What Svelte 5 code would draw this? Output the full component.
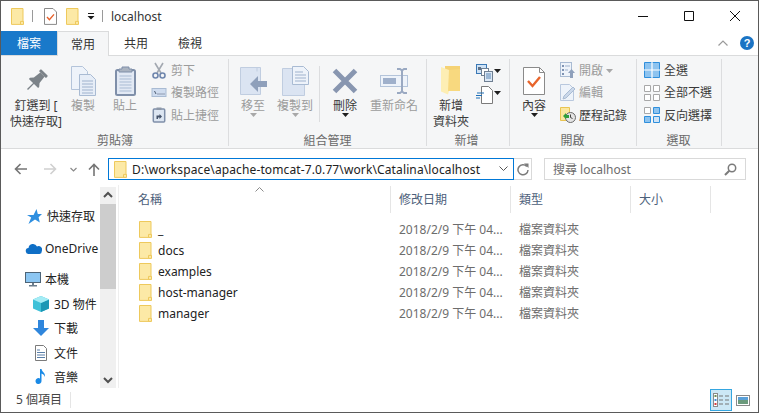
<script>
  const smallRows = [
    { label: '開啟', caret: true },
    { label: '編輯' },
    { label: '歷程記錄', on: true }
  ]

  const folders = ['_', 'docs', 'examples', 'host-manager', 'manager']
  const modified = '2018/2/9 下午 04...'
  const kind = '檔案資料夾'
</script>

{#snippet folder()}
  <svg class="folder" width="13" height="17" viewBox="0 0 13 17">
    <path d="M.5.5h11.5v15.9H.5z" fill="#fce9a6" stroke="#eec95c"/>
    <path d="M9.5 16.4v-3h3v3z" fill="#fce9a6" stroke="#eec95c"/>
  </svg>
{/snippet}

{#snippet caret(muted)}
  <svg class="caret" width="7" height="4" viewBox="0 0 7 4"><path d="M0 0h7L3.5 4z" fill={muted ? '#a8a8a8' : '#1e1e1e'}/></svg>
{/snippet}

<div class="window">
  <header class="titlebar">
    <div class="quick">
      {@render folder()}
      <span class="qsep"></span>
      <svg width="13" height="17" viewBox="0 0 13 17">
        <path d="M.5.5h8.5l3.5 3.5v12.4H.5z" fill="#fff" stroke="#8a8a8a"/>
        <path d="M3 9l2.4 2.6L10 6.4" fill="none" stroke="#e8602a" stroke-width="1.4"/>
      </svg>
      {@render folder()}
      <svg class="qdrop" width="8" height="8" viewBox="0 0 8 8"><path d="M1 1h6v1H1zM.5 4h7L4 7.6z" fill="#1a1a1a"/></svg>
      <span class="qsep"></span>
    </div>
    <span class="title">localhost</span>
    <div class="controls">
      <svg width="46" height="30" viewBox="0 0 46 30"><path d="M18 15.5h10" stroke="#111" fill="none"/></svg>
      <svg width="46" height="30" viewBox="0 0 46 30"><path d="M18.5 10.5h9v9h-9z" stroke="#111" fill="none"/></svg>
      <svg width="46" height="30" viewBox="0 0 46 30"><path d="M18 10l10 10M28 10L18 20" stroke="#111" fill="none"/></svg>
    </div>
  </header>

  <nav class="tabs">
    <span class="tab file">檔案</span>
    <span class="tab active">常用</span>
    <span class="tab">共用</span>
    <span class="tab">檢視</span>
    <span class="tab-tools">
      <svg width="10" height="6" viewBox="0 0 10 6"><path d="M.5 5.5L5 1l4.5 4.5" fill="none" stroke="#9a9a9a" stroke-width="1.2"/></svg>
      <span class="help">?</span>
    </span>
  </nav>

  <section class="ribbon">
    <div class="group g1">
      <div class="group-body">
        <div class="big on w-pin">
          <span class="big-icon">
            <svg width="24" height="24" viewBox="0 0 24 24">
              <g transform="rotate(45 12 12)" fill="#7c8389">
                <rect x="7" y="0" width="10" height="3" rx="1"/>
                <path d="M9 3h6l1 8 2.5 3v1.5h-13V14L8 11z"/>
                <rect x="11.3" y="15" width="1.4" height="9"/>
              </g>
            </svg>
          </span>
          <span>釘選到 [</span><span>快速存取]</span>
        </div>
        <div class="big w-42">
          <span class="big-icon">
            <svg width="25" height="30" viewBox="0 0 25 30">
              <path d="M.5.5h11l5 5v18H.5z" fill="#eef3fa" stroke="#b4c4da"/>
              <path d="M8.5 8.5h11l5 5v16h-16z" fill="#e6edf7" stroke="#a9bbd3"/>
              <path d="M11 15h11M11 18h11M11 21h11M11 24h11M11 27h11" stroke="#9fb2cd"/>
            </svg>
          </span>
          <span>複製</span>
        </div>
        <div class="big w-42">
          <span class="big-icon">
            <svg width="21" height="30" viewBox="0 0 21 30">
              <rect x="1" y="4" width="19" height="25" rx="1.5" fill="#e2e9f4" stroke="#7f8fa9" stroke-width="2"/>
              <path d="M7 1h7v2h3v3H4V3h3z" fill="#aab3c0" stroke="#7f8fa9"/>
              <path d="M4.5 10h12M4.5 13h12M4.5 16h12M4.5 19h12M4.5 22h12M4.5 25h12" stroke="#a9bbd3"/>
            </svg>
          </span>
          <span>貼上</span>
        </div>
        <div class="smalls s1">
          <div class="small">
            <svg width="14" height="17" viewBox="0 0 14 17">
              <path d="M3 1l6 10M11 1L5 11" stroke="#a3a9b1" stroke-width="1.6" fill="none"/>
              <circle cx="3.5" cy="13.5" r="2.5" fill="none" stroke="#6f86ad" stroke-width="1.6"/>
              <circle cx="10.5" cy="13.5" r="2.5" fill="none" stroke="#6f86ad" stroke-width="1.6"/>
            </svg>
            <span>剪下</span>
          </div>
          <div class="small">
            <svg width="15" height="9" viewBox="0 0 15 9">
              <rect x=".5" y=".5" width="14" height="8" fill="#cfdcef" stroke="#a9bbd3"/>
              <path d="M3 3l1.5 3M6 6h1M8 6h1M10 6h1M12 6h1" stroke="#4c5a70"/>
            </svg>
            <span>複製路徑</span>
          </div>
          <div class="small">
            <svg width="13" height="16" viewBox="0 0 13 16">
              <rect x=".8" y="2" width="11.4" height="13" rx="1" fill="#dde6f2" stroke="#7f8fa9" stroke-width="1.5"/>
              <rect x="4" y=".5" width="5" height="2.5" fill="#8d98a8"/>
              <path d="M4 12V8.5h3V7l2.5 2.5L7 12v-1.5H5.5V12z" fill="#45536a"/>
            </svg>
            <span>貼上捷徑</span>
          </div>
        </div>
      </div>
      <div class="group-label">剪貼簿</div>
    </div>

    <div class="group g2">
      <div class="group-body">
        <div class="big w-move">
          <span class="big-icon">
            <svg width="27" height="28" viewBox="0 0 27 28">
              <path d="M.5.5h20v27H.5z" fill="#dbe4f2" stroke="#c0cde0"/>
              <path d="M17 .5v4" stroke="#c0cde0"/>
              <path d="M10 17l8-8v5h9v6h-9v5z" fill="#8fa0bb"/>
            </svg>
          </span>
          <span>移至</span>
          {@render caret(true)}
        </div>
        <div class="big w-move">
          <span class="big-icon">
            <svg width="27" height="30" viewBox="0 0 27 30">
              <path d="M.5 2.500h22v27H.5z" fill="#dbe4f2" stroke="#c0cde0"/>
              <path d="M10.500.5h11l5 5v13h-16z" fill="#eef3fa" stroke="#a9bbd3"/>
              <path d="M13 6h8M13 9h11M13 12h11M13 15h11" stroke="#9fb2cd"/>
            </svg>
          </span>
          <span>複製到</span>
          {@render caret(true)}
        </div>
        <span class="inner-sep"></span>
        <div class="big on w-del">
          <span class="big-icon">
            <svg width="26" height="26" viewBox="0 0 26 26"><path d="M2.500 2.500l21 21M23.500 2.500l-21 21" stroke="#8896b0" stroke-width="5" fill="none"/></svg>
          </span>
          <span>刪除</span>
          {@render caret(false)}
        </div>
        <div class="big w-ren">
          <span class="big-icon">
            <svg width="29" height="26" viewBox="0 0 29 26">
              <rect x=".5" y="7.500" width="27" height="11" fill="#eef3fa" stroke="#b4c4da"/>
              <rect x="3" y="10" width="13" height="6" fill="#9fb0cb"/>
              <path d="M17 1h3l2 1.500L24 1h3M22 3v20M17 25h3l2-1.500L24 25h3" fill="none" stroke="#9aa9c2" stroke-width="2"/>
            </svg>
          </span>
          <span>重新命名</span>
        </div>
      </div>
      <div class="group-label">組合管理</div>
    </div>

    <div class="group g3">
      <div class="group-body">
        <div class="big on w-new">
          <span class="big-icon">
            <svg width="20" height="29" viewBox="0 0 20 29">
              <path d="M4 0h15v25H4z" fill="#f5d274"/>
              <path d="M0 1l8 3v21l-1 3.500-7-3z" fill="#fdeeb4"/>
              <path d="M8 4l11-1v22H7z" fill="#f8d97f"/>
            </svg>
          </span>
          <span>新增</span><span>資料夾</span>
        </div>
        <div class="new-tools">
          <div class="tool">
            <svg width="17" height="18" viewBox="0 0 17 18">
              <rect x=".5" y=".5" width="10" height="9" fill="#cfe2f5" stroke="#3b78b5"/>
              <path d="M2 3h3v3H2z" fill="#5c6f85"/>
              <rect x="5.500" y="4.500" width="7" height="7" fill="#fff" stroke="#6f7f92"/>
              <rect x="8.500" y="7.500" width="8" height="10" fill="#dde9f6" stroke="#6f7f92"/>
              <path d="M10 10h5M10 12h5M10 14h5" stroke="#5b86b5"/>
            </svg>
            {@render caret(false)}
          </div>
          <div class="tool">
            <svg width="17" height="18" viewBox="0 0 17 18">
              <path d="M5.500 .5h7l4 4v13h-11z" fill="#fff" stroke="#7b7b7b"/>
              <path d="M1 7h7M0 9.500h6M0 12h4" stroke="#1d6fb8" stroke-width="1.200"/>
            </svg>
            {@render caret(false)}
          </div>
        </div>
      </div>
      <div class="group-label">新增</div>
    </div>

    <div class="group g4">
      <div class="group-body">
        <div class="big on w-prop">
          <span class="big-icon">
            <svg width="22" height="28" viewBox="0 0 22 28">
              <path d="M.5.5h16l5 5v22H.5z" fill="#fff" stroke="#8a8a8a"/>
              <path d="M16.500.5v5h5" fill="none" stroke="#8a8a8a"/>
              <path d="M5 14l4.500 5L17 10" fill="none" stroke="#e8652c" stroke-width="2.400"/>
            </svg>
          </span>
          <span>內容</span>
          {@render caret(false)}
        </div>
        <div class="smalls s4">
          {#each smallRows as row, i}
            <div class="small" class:on={row.on}>
              {#if i === 0}
                <svg width="16" height="16" viewBox="0 0 16 16">
                  <rect x=".5" y=".5" width="11" height="14" fill="#eef3fa" stroke="#a9bbd3"/>
                  <path d="M2 3h2v2H2zM2 7h2v2H2zM2 11h2v2H2z" fill="#7f93b3"/>
                  <path d="M5 4h5M5 8h3" stroke="#9fb2cd"/>
                  <path d="M8 11l3.500-4 3.500 4h-2v5h-3v-5z" fill="#8fa0bb"/>
                </svg>
              {:else if i === 1}
                <svg width="16" height="17" viewBox="0 0 16 17">
                  <path d="M.5.500h9l4 4v12H.5z" fill="#eef3fa" stroke="#b9c8de"/>
                  <path d="M3 15l1-3 9-9 2 2-9 9z" fill="#cbd8ea" stroke="#a9bbd3"/>
                </svg>
              {:else}
                <svg width="16" height="16" viewBox="0 0 16 16">
                  <path d="M.5.500h9v13h-9z" fill="#fbe79f" stroke="#e9c451"/>
                  <circle cx="10.500" cy="10.500" r="5" fill="#e4e4e4" stroke="#6b6b6b"/>
                  <path d="M10.500 7.500v3l2 1" stroke="#444" fill="none"/>
                  <path d="M3 9l3-3v2h3v3H6v1z" fill="#2f9e3c"/>
                </svg>
              {/if}
              <span>{row.label}</span>
              {#if row.caret}{@render caret(true)}{/if}
            </div>
          {/each}
        </div>
      </div>
      <div class="group-label">開啟</div>
    </div>

    <div class="group g5">
      <div class="group-body">
        <div class="smalls s5">
          <div class="small on">
            <svg class="grid-icon" width="16" height="16" viewBox="0 0 16 16">
              <path d="M.5.500h15v15H.5z" fill="#8dc3ef" stroke="#2f8fdc"/>
              <path d="M8 0v16M0 8h16" stroke="#fff" stroke-width="1.200"/>
            </svg>
            <span>全選</span>
          </div>
          <div class="small on">
            <svg class="grid-icon" width="16" height="16" viewBox="0 0 16 16">
              <path d="M.5.500h6v6h-6zM9.500.500h6v6h-6zM.5 9.500h6v6h-6zM9.500 9.500h6v6h-6z" fill="#fff" stroke="#a8a8a8"/>
            </svg>
            <span>全部不選</span>
          </div>
          <div class="small on">
            <svg class="grid-icon" width="16" height="16" viewBox="0 0 16 16">
              <path d="M.5.500h6v6h-6z" fill="#fff" stroke="#a8a8a8"/>
              <path d="M9.500.500h6v6h-6zM.5 9.500h6v6h-6z" fill="#8dc3ef" stroke="#2f8fdc"/>
              <path d="M9.500 9.500h6v6h-6z" fill="#cfe4f7" stroke="#2f8fdc"/>
            </svg>
            <span>反向選擇</span>
          </div>
        </div>
      </div>
      <div class="group-label">選取</div>
    </div>
  </section>

  <div class="navbar">
    <div class="arrows">
      <svg class="back" width="13" height="12" viewBox="0 0 13 12"><path d="M13 6H2M6.500 1L1.500 6l5 5" fill="none" stroke="#757575" stroke-width="1.600"/></svg>
      <svg class="fwd" width="13" height="12" viewBox="0 0 13 12"><path d="M0 6h11M6.500 1l5 5-5 5" fill="none" stroke="#d0d0d0" stroke-width="1.600"/></svg>
      <svg class="hist" width="7" height="5" viewBox="0 0 7 5"><path d="M.5 1L3.500 4l3-3" fill="none" stroke="#8a8a8a" stroke-width="1.200"/></svg>
      <svg class="up" width="12" height="13" viewBox="0 0 12 13"><path d="M6 13V2M1 6.500l5-5 5 5" fill="none" stroke="#757575" stroke-width="1.600"/></svg>
    </div>
    <div class="address">
      {@render folder()}
      <span class="path">D:\workspace\apache-tomcat-7.0.77\work\Catalina\localhost</span>
      <svg width="9" height="6" viewBox="0 0 9 6"><path d="M.5.500l4 4 4-4" fill="none" stroke="#555"/></svg>
    </div>
    <div class="refresh">
      <svg width="12" height="13" viewBox="0 0 12 13"><path d="M9.800 3.500A5 5 0 1 0 11 7" fill="none" stroke="#7b7b7b" stroke-width="1.500"/><path d="M7 .5h4.500v4.500z" fill="#7b7b7b"/></svg>
    </div>
    <div class="search">
      <span>搜尋 localhost</span>
      <svg width="13" height="13" viewBox="0 0 13 13"><circle cx="8" cy="5" r="3.700" fill="none" stroke="#7b7b7b" stroke-width="1.500"/><path d="M5.300 7.700L1 12" stroke="#7b7b7b" stroke-width="2"/></svg>
    </div>
  </div>

  <main class="main">
    <aside class="sidebar">
      <div class="tree t-quick">
        <svg width="15" height="15" viewBox="0 0 15 15"><path d="M9.500 0l1.300 5H15l-3.400 3.200 1.200 5.300L8 10.500 1.500 15l2.700-6.500L0 6h6.500z" fill="#2f8fe0"/></svg>
        <span>快速存取</span>
      </div>
      <div class="tree t-cloud">
        <svg width="17" height="11" viewBox="0 0 17 11"><path d="M4 11a3 3 0 0 1-.5-6A4.500 4.500 0 0 1 12 3.500a3.500 3.500 0 0 1 4.800 4.500 3 3 0 0 1-2.300 3z" fill="#0f6fc6"/></svg>
        <span>OneDrive</span>
      </div>
      <div class="tree t-pc">
        <svg width="16" height="15" viewBox="0 0 16 15"><rect x=".5" y=".5" width="15" height="10" fill="#8cc6f2" stroke="#4d6477"/><path d="M7 11h2v2H7zM4 13h8v1.500H4z" fill="#6a7c8c"/></svg>
        <span>本機</span>
      </div>
      <div class="tree sub t-3d">
        <svg width="16" height="16" viewBox="0 0 16 16"><path d="M8 0l8 3.500v9L8 16l-8-3.500v-9z" fill="#3fc1d8"/><path d="M8 7l8-3.500v9L8 16z" fill="#1b97b5"/><path d="M8 0l8 3.500L8 7 0 3.500z" fill="#a4ecf5"/></svg>
        <span>3D 物件</span>
      </div>
      <div class="tree sub t-dl">
        <svg width="16" height="16" viewBox="0 0 16 16"><path d="M5 0h6v8h5l-8 8-8-8h5z" fill="#2f86dc"/></svg>
        <span>下載</span>
      </div>
      <div class="tree sub t-doc">
        <svg width="16" height="16" viewBox="0 0 16 16"><path d="M2.500.5h8l3 3v12h-11z" fill="#fff" stroke="#7b7b7b"/><path d="M4 5h3M4 7.500h8M4 10h8M4 12.500h8" stroke="#5a7fa8"/></svg>
        <span>文件</span>
      </div>
      <div class="tree sub t-music">
        <svg width="16" height="16" viewBox="0 0 16 16"><path d="M7 0h1.500c.5 3 4 3.500 3.500 8C11 5.500 9.800 5 8.500 4.500V12a3 3 0 1 1-1.500-2.500z" fill="#1a8ae6"/></svg>
        <span>音樂</span>
      </div>
    </aside>

    <div class="scrollbar">
      <svg width="16" height="16" viewBox="0 0 16 16"><path d="M4 10l4-4 4 4" fill="none" stroke="#505050" stroke-width="2"/></svg>
      <div class="thumb"></div>
      <svg class="down" width="16" height="16" viewBox="0 0 16 16"><path d="M4 6l4 4 4-4" fill="none" stroke="#505050" stroke-width="2"/></svg>
    </div>

    <div class="files">
      <svg class="sort" width="9" height="5" viewBox="0 0 9 5"><path d="M.5 4.500l4-4 4 4" fill="none" stroke="#8a8a8a"/></svg>
      <div class="columns">
        <span>名稱</span>
        <span>修改日期</span>
        <span>類型</span>
        <span>大小</span>
      </div>
      <ul class="rows">
        {#each folders as name}
          <li class="row">
            <span class="name">{@render folder()}<span>{name}</span></span>
            <span class="meta">{modified}</span>
            <span class="meta">{kind}</span>
          </li>
        {/each}
      </ul>
    </div>
  </main>

  <footer class="status">
    <span class="count">5 個項目</span>
    <span class="views">
      <span class="view selected">
        <svg width="16" height="14" viewBox="0 0 16 14">
          <rect x=".5" y=".5" width="4" height="13" fill="#fff" stroke="#8a8a8a"/>
          <path d="M1.500 2h2v2h-2z" fill="#6b8f55"/>
          <path d="M1.500 6h2v2h-2z" fill="#3e8fd8"/>
          <path d="M1.500 10h2v2h-2z" fill="#d83c3c"/>
          <path d="M6 3h4M12 3h4M6 7h4M12 7h4M6 11h4M12 11h4" stroke="#777" stroke-width="1.200"/>
        </svg>
      </span>
      <span class="view">
        <svg width="14" height="11" viewBox="0 0 14 11">
          <rect x=".5" y=".5" width="13" height="10" fill="#fff" stroke="#8a8a8a"/>
          <path d="M2 2h10v3H2z" fill="#5aa0d8"/>
          <path d="M2 5h10v4H2z" fill="#6b9a7c"/>
        </svg>
      </span>
    </span>
  </footer>
</div>

<style>
  :global(body) {
    margin: 0;
    background: #fff;
  }

  .window {
    box-sizing: border-box;
    width: 759px;
    height: 413px;
    display: flex;
    flex-direction: column;
    overflow: hidden;
    border: 1px solid #5a5a5a;
    background: #fff;
    color: #1e1e1e;
    font: 12px/17px "Noto Sans", "Noto Sans CJK TC", sans-serif;
  }

  svg {
    display: block;
    flex: none;
  }

  .titlebar {
    height: 30px;
    display: flex;
    align-items: center;
    flex: none;
  }

  .quick {
    display: flex;
    align-items: center;
    padding-left: 10px;
  }

  .quick > :nth-child(3) {
    margin-left: 11px;
  }

  .quick > :nth-child(4) {
    margin-left: 9px;
  }

  .qsep {
    width: 1px;
    height: 12px;
    margin-left: 8px;
    background: #9a9a9a;
  }

  .quick > .qdrop {
    margin-left: 8px;
  }

  .quick > .qdrop + .qsep {
    margin-left: 7px;
  }

  .title {
    margin-left: 8px;
    color: #333;
  }

  .controls {
    display: flex;
    margin-left: auto;
  }

  .tabs {
    height: 24px;
    display: flex;
    flex: none;
    position: relative;
    z-index: 1;
  }

  .tab {
    width: 54px;
    display: flex;
    align-items: center;
    justify-content: center;
    color: #333;
  }

  .tab.file {
    width: 56px;
    background: #1979ca;
    color: #fff;
  }

  .tab.active {
    width: 52px;
    height: 25px;
    box-sizing: border-box;
    border: 1px solid #dadbdc;
    border-bottom: 0;
    background: #f5f6f7;
  }

  .tab-tools {
    display: flex;
    align-items: center;
    gap: 12px;
    margin-left: auto;
    padding-right: 4px;
  }

  .help {
    width: 14px;
    height: 14px;
    border-radius: 50%;
    background: #1b74c4;
    color: #fff;
    font: bold 11px/14px "Liberation Sans", sans-serif;
    text-align: center;
  }

  .ribbon {
    height: 94px;
    display: flex;
    flex: none;
    box-sizing: border-box;
    border-top: 1px solid #dadbdc;
    border-bottom: 1px solid #dadbdc;
    background: #f5f6f7;
  }

  .group {
    position: relative;
    display: flex;
    flex-direction: column;
    color: #9c9c9c;
  }

  .group::after {
    content: '';
    position: absolute;
    top: 3px;
    bottom: 2px;
    right: 0;
    width: 1px;
    background: #dcdddf;
  }

  .g1 { width: 228px; padding-left: 9px; box-sizing: border-box; }
  .g2 { width: 198px; padding-left: 3px; box-sizing: border-box; }
  .g3 { width: 83px; padding-left: 4px; box-sizing: border-box; }
  .g4 { width: 127px; box-sizing: border-box; }
  .g5 { width: 85px; box-sizing: border-box; }

  .group-body {
    height: 78px;
    display: flex;
    flex: none;
  }

  .group-label {
    height: 14px;
    line-height: 14px;
    text-align: center;
    color: #6a6a6a;
  }

  .g1 .group-label { padding-right: 9px; }
  .g2 .group-label { padding-right: 4px; }
  .g3 .group-label { padding-right: 8px; }
  .g4 .group-label { padding-right: 2px; }
  .g5 .group-label { padding-right: 2px; }

  .big {
    display: flex;
    flex-direction: column;
    align-items: center;
    padding-top: 8px;
    line-height: 16px;
    white-space: nowrap;
  }

  .big.on {
    color: #3a3a3a;
  }

  .big-icon {
    height: 33px;
    margin-bottom: 1px;
    display: flex;
    align-items: center;
    justify-content: center;
  }

  .caret {
    margin-top: -1px;
  }

  .w-pin { width: 52px; }
  .w-42 { width: 42px; }
  .w-move { width: 42px; }
  .w-del { width: 50px; }
  .w-ren { width: 46px; margin-left: 1px; }
  .w-new { width: 40px; }
  .w-prop { width: 40px; margin-left: 4px; }

  .inner-sep {
    width: 1px;
    height: 56px;
    margin: 10px 0 0 3px;
    background: #dcdddf;
  }

  .smalls {
    display: grid;
    grid-auto-rows: 22.5px;
    padding-top: 3px;
    height: max-content;
  }

  .s1 { margin-left: 5px; }
  .s4 { margin-left: 6px; }
  .s5 { margin-left: 7px; }

  .small {
    display: flex;
    align-items: center;
    gap: 4px;
    white-space: nowrap;
  }

  .s4 .small {
    gap: 3px;
  }

  .small > svg:first-child {
    width: 16px;
  }

  .small.on {
    color: #3a3a3a;
  }

  .small .caret {
    margin: 2px 0 0 0;
    width: 7px;
  }

  .new-tools {
    display: grid;
    grid-auto-rows: 22px;
    align-items: center;
    padding: 6px 0 0 5px;
    height: max-content;
  }

  .tool {
    display: flex;
    align-items: flex-start;
    gap: 1px;
  }

  .tool .caret {
    margin-top: 5px;
  }

  .navbar {
    height: 36px;
    display: flex;
    align-items: flex-start;
    flex: none;
    padding-top: 9px;
    box-sizing: border-box;
  }

  .arrows {
    width: 107px;
    height: 22px;
    display: flex;
    align-items: center;
    padding-left: 13px;
    box-sizing: border-box;
  }

  .fwd { margin-left: 17px; }
  .hist { margin-left: 13px; }
  .up { margin-left: 11px; }

  .address {
    width: 406px;
    height: 22px;
    display: flex;
    align-items: center;
    gap: 5px;
    padding: 0 5px 0 5px;
    box-sizing: border-box;
    border: 1px solid #0078d7;
  }

  .path {
    flex: 1;
    padding-top: 1px;
    white-space: nowrap;
    letter-spacing: .12px;
    color: #222;
  }

  .refresh {
    width: 18px;
    height: 22px;
    display: flex;
    align-items: center;
    justify-content: center;
    box-sizing: border-box;
    border: 1px solid #d9d9d9;
    border-left: 0;
  }

  .search {
    width: 202px;
    height: 22px;
    display: flex;
    align-items: center;
    justify-content: space-between;
    margin-left: 12px;
    padding: 0 8px;
    box-sizing: border-box;
    border: 1px solid #d9d9d9;
    color: #6d6d6d;
  }

  .main {
    flex: 1;
    min-height: 0;
    display: flex;
  }

  .sidebar {
    width: 99px;
    flex: none;
    padding-top: 19px;
    box-sizing: border-box;
    overflow: hidden;
  }

  .tree {
    height: 24px;
    display: flex;
    align-items: center;
    gap: 5px;
    padding-left: 25px;
    white-space: nowrap;
    color: #222;
  }

  .tree.sub {
    padding-left: 32px;
  }

  .t-quick { padding-left: 26px; margin-bottom: 8px; }
  .t-cloud { margin-bottom: 7px; gap: 3px; padding-left: 24px; }
  .t-pc { margin-bottom: 1px; gap: 4px; padding-left: 24px; }
  .t-dl { margin-bottom: 1px; }

  .scrollbar {
    width: 16px;
    flex: none;
    display: flex;
    flex-direction: column;
    margin-top: 2px;
    background: #f0f0f0;
  }

  .scrollbar svg:first-child {
    margin-bottom: 1px;
  }

  .thumb {
    height: 85px;
    background: #cdcdcd;
  }

  .down {
    margin-top: auto;
  }

  .files {
    flex: 1;
    position: relative;
    margin-left: 2px;
    padding-top: 1px;
    border-left: 1px solid #eeeeee;
  }

  .sort {
    position: absolute;
    top: 2px;
    left: 136px;
  }

  .columns {
    height: 27px;
    display: grid;
    grid-template-columns: 272px 120px 120px 80px;
    color: #4c607a;
  }

  .columns span {
    display: flex;
    align-items: center;
    padding-left: 19px;
    box-sizing: border-box;
    border-right: 1px solid #e5e5e5;
  }

  .columns span + span {
    padding-left: 8px;
  }

  .rows {
    list-style: none;
    margin: 6px 0 0;
    padding: 0;
  }

  .row {
    height: 21px;
    display: grid;
    grid-template-columns: 272px 120px 120px;
    align-items: center;
  }

  .name {
    display: flex;
    align-items: center;
    gap: 6px;
    padding-left: 20px;
    color: #222;
  }

  .meta {
    padding-left: 8px;
    color: #6d6d6d;
    white-space: nowrap;
  }

  .status {
    height: 24px;
    display: flex;
    align-items: center;
    flex: none;
    color: #444;
  }

  .count {
    width: 70px;
    height: 16px;
    line-height: 16px;
    padding-left: 15px;
    box-sizing: border-box;
    border-right: 1px solid #e5e5e5;
  }

  .views {
    display: flex;
    align-items: center;
    gap: 4px;
    margin-left: auto;
    padding-right: 8px;
  }

  .view {
    display: flex;
    align-items: center;
    justify-content: center;
  }

  .view.selected {
    width: 22px;
    height: 22px;
    box-sizing: border-box;
    border: 1px solid #35a6e0;
    background: #cce8f6;
  }
</style>
